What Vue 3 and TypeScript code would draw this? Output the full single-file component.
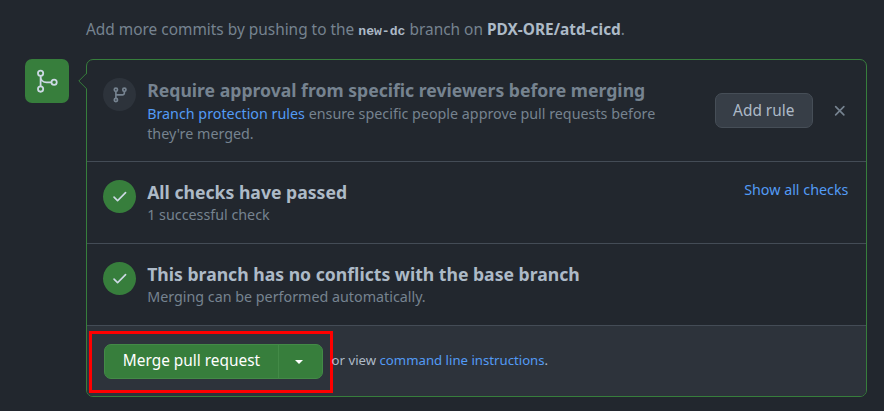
<script setup lang="ts">
interface Check {
  title: string
  detail: string
  action?: string
}

const checks: Check[] = [
  { title: 'All checks have passed', detail: '1 successful check', action: 'Show all checks' },
  { title: 'This branch has no conflicts with the base branch', detail: 'Merging can be performed automatically.' },
]
</script>

<template>
  <main class="page">
    <p class="hint">Add more commits by pushing to the <code>new-dc</code> branch on <strong>PDX-ORE/atd-cicd</strong>.</p>
    <div class="merge">
      <div class="badge">
        <svg width="26.4" height="26.4" viewBox="0 0 24 24" fill="none" stroke="currentColor" stroke-width="1.6">
          <circle cx="6" cy="4.85" r="2.4" />
          <circle cx="6" cy="19.2" r="2.4" />
          <circle cx="18.3" cy="13.05" r="2.4" />
          <path d="M6 7.25v9.5M6 7.5c0 3.2 2.3 5.55 5.3 5.55h4.6" />
        </svg>
      </div>
      <section class="box">
        <svg class="pointer" width="9" height="18" viewBox="0 0 9 18">
          <path class="pointer-fill" d="M9 1.5 1 9.2 9 17z" />
          <path class="pointer-line" d="M8.5 1.3.8 9l7.7 7.7" />
        </svg>
        <div class="row rule">
          <span class="circle muted">
            <svg width="17.6" height="17.6" viewBox="0 0 16 16" fill="none" stroke="currentColor" stroke-width="1.5">
              <circle cx="4.45" cy="3.4" r="1.5" />
              <circle cx="4.45" cy="12.75" r="1.5" />
              <circle cx="12.15" cy="3.4" r="1.5" />
              <path d="M4.45 4.9v6.35M4.45 8.1h5.95a1.75 1.75 0 0 0 1.75-1.75V4.9" />
            </svg>
          </span>
          <div class="copy">
            <h3>Require approval from specific reviewers before merging</h3>
            <p><a>Branch protection rules</a> ensure specific people approve pull requests before they're merged.</p>
          </div>
          <button class="add">Add rule</button>
          <svg class="close" width="17.6" height="17.6" viewBox="0 0 16 16" fill="none" stroke="currentColor" stroke-width="1.5" stroke-linecap="round">
            <path d="m4.25 4.25 7.5 7.5M11.75 4.25l-7.5 7.5" />
          </svg>
        </div>
        <div v-for="check in checks" :key="check.title" class="row">
          <span class="circle">
            <svg width="17.6" height="17.6" viewBox="0 0.5 16 16" fill="currentColor">
              <path d="M13.78 4.22a.75.75 0 0 1 0 1.06l-7.25 7.25a.75.75 0 0 1-1.06 0L2.22 9.28a.75.75 0 0 1 1.06-1.06L6 10.94l6.72-6.72a.75.75 0 0 1 1.06 0z" />
            </svg>
          </span>
          <div class="copy">
            <h3>{{ check.title }}</h3>
            <p>{{ check.detail }}</p>
          </div>
          <a v-if="check.action" class="action">{{ check.action }}</a>
        </div>
        <footer class="footer">
          <div class="highlight">
            <div class="group">
              <button class="primary">Merge pull request</button>
              <button class="caret" aria-label="Select merge method"><i></i></button>
            </div>
          </div>
          <p class="alt">or view <a>command line instructions</a>.</p>
        </footer>
      </section>
    </div>
  </main>
</template>

<style>
body {
  background: #22272e;
}
</style>

<style scoped>
.page {
  box-sizing: border-box;
  height: 411px;
  padding: 18px 17px 0 25px;
  font-family: "Noto Sans", sans-serif;
  font-size: 15.4px;
  line-height: 23px;
  color: #adbac7;
}
p,
h3 {
  margin: 0;
}
a {
  color: #539bf5;
}
.hint {
  height: 41px;
  padding-left: 61px;
  font-size: 15.42px;
  line-height: 24px;
  color: #768390;
  white-space: nowrap;
}
.hint code {
  font: bold 13.1px "Liberation Mono", monospace;
  color: #adbac7;
}
.hint strong {
  color: #adbac7;
}
.merge {
  display: flex;
  gap: 17px;
}
.badge {
  display: flex;
  align-items: center;
  justify-content: center;
  flex: none;
  width: 44px;
  height: 44px;
  border-radius: 7px;
  background: #377e3c;
  color: #cdd9e5;
}
.box {
  position: relative;
  box-sizing: border-box;
  width: 781px;
  height: 338px;
  border: 1px solid #377e3c;
  border-radius: 7px;
}
.pointer {
  position: absolute;
  left: -9px;
  top: 12px;
}
.pointer-fill {
  fill: #22272e;
}
.pointer-line {
  fill: none;
  stroke: #377e3c;
}
.row {
  display: flex;
  align-items: flex-start;
  box-sizing: border-box;
  height: 82px;
  padding: 18px 18px 0 16px;
  border-bottom: 1px solid #444c56;
}
.rule {
  height: 102px;
}
.circle {
  display: flex;
  align-items: center;
  justify-content: center;
  flex: none;
  width: 33px;
  height: 33px;
  margin-right: 11.2px;
  border-radius: 50%;
  background: #377e3c;
  color: #cdd9e5;
}
.muted {
  background: #2d333b;
  color: #768390;
}
.copy {
  flex: 1;
}
.copy h3 {
  font-size: 17.63px;
  line-height: 25px;
  color: #adbac7;
  white-space: nowrap;
}
.rule h3 {
  color: #768390;
}
.copy p {
  font-size: 14.3px;
  line-height: 20px;
  color: #768390;
}
.rule .copy {
  flex: none;
  width: 530px;
}
.rule p {
  padding-top: 1px;
}
.add {
  box-sizing: border-box;
  width: 98px;
  height: 35px;
  margin: 15px 0 0 37.8px;
  padding: 0;
  border: 1px solid #464e57;
  border-radius: 7px;
  background: #373e47;
  color: #adbac7;
  font: 15.4px/22px "Noto Sans", sans-serif;
}
.close {
  margin: 24px 0 0 18px;
  color: #768390;
}
.action {
  margin-right: -0.4px;
  font-size: 14.3px;
  line-height: 20px;
}
.footer {
  display: flex;
  align-items: center;
  height: 70px;
  border-radius: 0 0 6px 6px;
  background: #2d333b;
}
.highlight {
  box-sizing: border-box;
  flex: none;
  width: 244px;
  height: 62px;
  margin: 2px 0 0 2.4px;
  padding: 10px 0 0 11.6px;
  border: 3px solid #ff0000;
}
.group {
  display: flex;
  box-sizing: border-box;
  width: 219px;
  height: 35px;
  border: 1px solid #438a47;
  border-radius: 7px;
  overflow: hidden;
  background: #377e3c;
}
.group button {
  padding: 0;
  border: 0;
  background: none;
  color: #fff;
  font: 15.4px/22px "Noto Sans", sans-serif;
}
.primary {
  width: 173px;
  margin-top: -1px;
}
.group .caret {
  display: flex;
  align-items: center;
  justify-content: center;
  flex: 1;
  padding-right: 2px;
  border-left: 1px solid #438a47;
}
.caret i {
  border: 4.4px solid transparent;
  border-top-color: #fff;
  border-bottom: 0;
}
.alt {
  margin: -2px 0 0 -1.8px;
  font-size: 13.2px;
  color: #adbac7;
}
</style>
